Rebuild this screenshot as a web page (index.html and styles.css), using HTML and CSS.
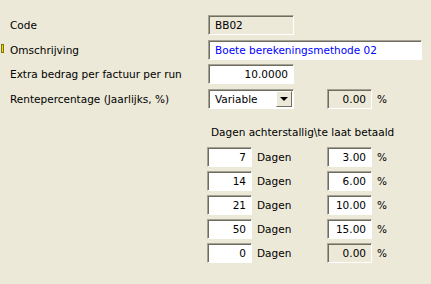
FILE: index.html
```html
<!DOCTYPE html>
<html lang="nl">
<head>
    <meta charset="UTF-8">
    <title>Boete berekening</title>
    <link rel="stylesheet" href="styles.css">
</head>
<body>
    <div class="form">
        <div class="row">
            <span class="label">Code</span>
            <div class="box ro code">BB02</div>
        </div>
        <div class="row req">
            <span class="marker"></span>
            <span class="label">Omschrijving</span>
            <div class="box desc">Boete berekeningsmethode 02</div>
        </div>
        <div class="row">
            <span class="label">Extra bedrag per factuur per run</span>
            <div class="box num amount">10.0000</div>
        </div>
        <div class="row">
            <span class="label">Rentepercentage (Jaarlijks, %)</span>
            <div class="box select">
                <span>Variable</span>
                <span class="drop"><span class="arrow"></span></span>
            </div>
            <div class="box ro num pct">0.00</div>
            <span class="unit">%</span>
        </div>

        <div class="table">
            <div class="caption">Dagen achterstallig\te laat betaald</div>
            <div class="trow">
                <div class="box num days">7</div><span class="dlabel">Dagen</span>
                <div class="box num pct">3.00</div><span class="unit">%</span>
            </div>
            <div class="trow">
                <div class="box num days">14</div><span class="dlabel">Dagen</span>
                <div class="box num pct">6.00</div><span class="unit">%</span>
            </div>
            <div class="trow">
                <div class="box num days">21</div><span class="dlabel">Dagen</span>
                <div class="box num pct">10.00</div><span class="unit">%</span>
            </div>
            <div class="trow">
                <div class="box num days">50</div><span class="dlabel">Dagen</span>
                <div class="box num pct">15.00</div><span class="unit">%</span>
            </div>
            <div class="trow">
                <div class="box num days">0</div><span class="dlabel">Dagen</span>
                <div class="box ro num pct">0.00</div><span class="unit">%</span>
            </div>
        </div>
    </div>
</body>
</html>
```
FILE: styles.css
```css
* {
    margin: 0;
    padding: 0;
    box-sizing: border-box;
}

body {
    background: #ece9d8;
    font-family: "DejaVu Sans", sans-serif;
    font-size: 10.5px;
    color: #000;
    width: 431px;
    height: 284px;
    overflow: hidden;
}

.form {
    padding: 15px 0 0 0;
    display: flex;
    flex-direction: column;
}

.row {
    position: relative;
    display: flex;
    align-items: center;
    height: 20px;
    margin-bottom: 4.7px;
}

.label {
    width: 208px;
    padding-left: 10px;
}

.marker {
    position: absolute;
    left: 1px;
    top: 4px;
    width: 3px;
    height: 9px;
    background: #f0e000;
    border: 1px solid #7a7400;
}

.box {
    height: 20px;
    background: #fff;
    border: 1px solid;
    border-color: #a5a293 #fff #fff #a5a293;
    box-shadow: inset 1px 1px 0 #6f6c60;
    display: flex;
    align-items: center;
    padding: 0 5px 0 6px;
    white-space: nowrap;
}

.ro {
    background: #ece9d8;
}

.num {
    justify-content: flex-end;
}

.code {
    width: 86px;
}

.desc {
    width: 214px;
    color: #0000ff;
}

.amount {
    width: 86px;
}

.select {
    width: 86px;
    justify-content: space-between;
    padding-right: 1px;
}

.drop {
    width: 16px;
    height: 16px;
    background: #ece9d8;
    border: 1px solid;
    border-color: #fff #716f64 #716f64 #fff;
    display: flex;
    align-items: center;
    justify-content: center;
}

.arrow {
    width: 0;
    height: 0;
    border-left: 4px solid transparent;
    border-right: 4px solid transparent;
    border-top: 4px solid #000;
}

.pct {
    width: 45px;
    margin-left: 33px;
}

.unit {
    margin-left: 5px;
}

.table {
    margin-top: 12px;
    padding-left: 207px;
}

.caption {
    padding-left: 4px;
    height: 18px;
    margin-bottom: 3px;
}

.trow {
    display: flex;
    align-items: center;
    height: 20px;
    margin-bottom: 4px;
}

.days {
    width: 45px;
}

.dlabel {
    width: 75px;
    padding-left: 5px;
}

.trow .pct {
    margin-left: 0;
}
```
